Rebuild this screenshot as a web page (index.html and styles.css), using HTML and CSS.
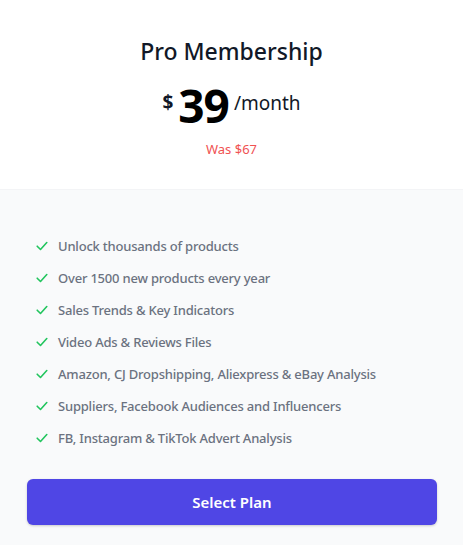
FILE: index.html
```html
<!DOCTYPE html>
<html lang="en">
<head>
<meta charset="utf-8">
<title>Pro Membership</title>
<link rel="stylesheet" href="styles.css">
</head>
<body>
<div class="card">
  <header class="top">
    <h2 class="title">Pro Membership</h2>
    <div class="price">
      <span class="currency">$</span>
      <span class="amount">39</span>
      <span class="period">/month</span>
    </div>
    <p class="was">Was $67</p>
  </header>
  <section class="bottom">
    <ul class="features">
      <li><svg class="check" viewBox="0 0 12 10"><path d="M1.2 5.2l3.3 3.3 6.3-7" fill="none" stroke="currentColor" stroke-width="1.6" stroke-linecap="round" stroke-linejoin="round"/></svg><span>Unlock thousands of products</span></li>
      <li><svg class="check" viewBox="0 0 12 10"><path d="M1.2 5.2l3.3 3.3 6.3-7" fill="none" stroke="currentColor" stroke-width="1.6" stroke-linecap="round" stroke-linejoin="round"/></svg><span>Over 1500 new products every year</span></li>
      <li><svg class="check" viewBox="0 0 12 10"><path d="M1.2 5.2l3.3 3.3 6.3-7" fill="none" stroke="currentColor" stroke-width="1.6" stroke-linecap="round" stroke-linejoin="round"/></svg><span>Sales Trends &amp; Key Indicators</span></li>
      <li><svg class="check" viewBox="0 0 12 10"><path d="M1.2 5.2l3.3 3.3 6.3-7" fill="none" stroke="currentColor" stroke-width="1.6" stroke-linecap="round" stroke-linejoin="round"/></svg><span>Video Ads &amp; Reviews Files</span></li>
      <li><svg class="check" viewBox="0 0 12 10"><path d="M1.2 5.2l3.3 3.3 6.3-7" fill="none" stroke="currentColor" stroke-width="1.6" stroke-linecap="round" stroke-linejoin="round"/></svg><span>Amazon, CJ Dropshipping, Aliexpress &amp; eBay Analysis</span></li>
      <li><svg class="check" viewBox="0 0 12 10"><path d="M1.2 5.2l3.3 3.3 6.3-7" fill="none" stroke="currentColor" stroke-width="1.6" stroke-linecap="round" stroke-linejoin="round"/></svg><span>Suppliers, Facebook Audiences and Influencers</span></li>
      <li><svg class="check" viewBox="0 0 12 10"><path d="M1.2 5.2l3.3 3.3 6.3-7" fill="none" stroke="currentColor" stroke-width="1.6" stroke-linecap="round" stroke-linejoin="round"/></svg><span>FB, Instagram &amp; TikTok Advert Analysis</span></li>
    </ul>
    <button class="select">Select Plan</button>
  </section>
</div>
</body>
</html>
```
FILE: styles.css
```css
* { box-sizing: border-box; }
html, body { margin: 0; padding: 0; }
body {
  font-family: "Noto Sans", "Open Sans", sans-serif;
  background: #f9fafb;
  width: 463px;
  height: 545px;
  overflow: hidden;
}
.card { display: flex; flex-direction: column; }
.top {
  background: #ffffff;
  height: 190px;
  border-bottom: 1px solid #f3f4f6;
  display: flex;
  flex-direction: column;
  align-items: center;
  padding-top: 35px;
}
.title {
  margin: 0;
  font-size: 23px;
  font-weight: 500;
  color: #111827;
  line-height: 32px;
}
.price {
  display: flex;
  align-items: center;
  margin-top: 13px;
  color: #000;
  height: 50px;
}
.currency { font-size: 19px; font-weight: 700; margin-right: 5px; margin-bottom: 6px; color: #111827; }
.amount { font-size: 46px; font-weight: 700; line-height: 50px; letter-spacing: -1px; }
.period { font-size: 19px; font-weight: 400; color: #111827; margin-left: 5px; margin-bottom: 4px; }
.was {
  margin: 10px 0 0;
  font-size: 13px;
  color: #f05252;
  line-height: 18px;
}
.bottom {
  padding: 46px 26px 0 27px;
  display: flex;
  flex-direction: column;
}
.features {
  list-style: none;
  margin: 0;
  padding: 0 0 0 9px;
  display: flex;
  flex-direction: column;
  gap: 12px;
}
.features li {
  display: flex;
  align-items: center;
  height: 20px;
  font-size: 13px;
  letter-spacing: -0.2px;
  font-weight: 500;
  color: #6b7280;
}
.check {
  width: 12px;
  height: 10px;
  color: #22c55e;
  margin-right: 10px;
  flex: none;
}
.select {
  margin-top: 31px;
  height: 46px;
  width: 410px;
  border: none;
  border-radius: 6px;
  background: #4f46e5;
  color: #fff;
  font-family: inherit;
  font-size: 15px;
  font-weight: 600;
  box-shadow: 0 1px 3px rgba(0,0,0,0.12), 0 1px 2px rgba(0,0,0,0.08);
}
```
